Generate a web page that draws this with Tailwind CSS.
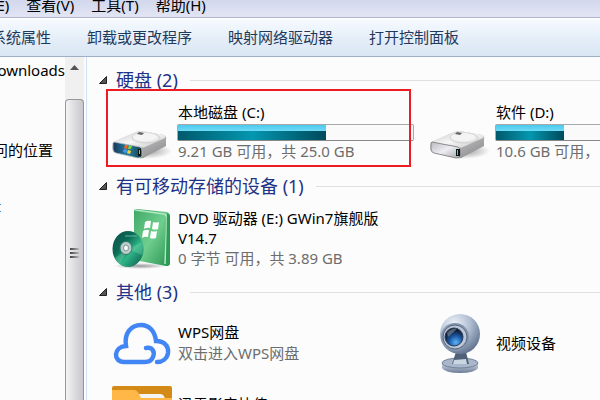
<!DOCTYPE html>
<html lang="zh-CN">

<head>
    <meta charset="UTF-8">
    <meta name="viewport" content="width=device-width, initial-scale=1.0">
    <title>计算机</title>
    <script src="https://cdn.jsdelivr.net/npm/@tailwindcss/browser@4"></script>
</head>

<body class="h-screen flex flex-col overflow-hidden bg-[#fcfcfc] font-['Noto_Sans','Noto_Sans_CJK_SC',sans-serif] text-[15px] leading-5 text-black">

    <!-- Menu bar -->
    <nav class="h-[18px] shrink-0 bg-linear-to-b from-[#d2d7ec] to-[#e2e5f4] border-b border-[#b0b5cc]">
        <div class="h-full flex items-end gap-[17px] -ml-[38px] pb-[2px] whitespace-nowrap">
            <button>编辑(E)</button>
            <button>查看(V)</button>
            <button>工具(T)</button>
            <button>帮助(H)</button>
        </div>
    </nav>

    <!-- Toolbar -->
    <div class="h-[39px] shrink-0 border-t border-b border-t-white border-b-[#a0afc8] bg-linear-to-b from-[#f6fafe] via-[#e6eff9] via-50% to-[#dae6f4]">
        <div class="h-full flex items-center gap-9 -ml-[9px] pb-[2px] whitespace-nowrap text-[#1e395b]">
            <button>系统属性</button>
            <button>卸载或更改程序</button>
            <button>映射网络驱动器</button>
            <button>打开控制面板</button>
        </div>
    </div>

    <div class="flex flex-1 min-h-0">
        <!-- Navigation pane -->
        <aside class="w-[65px] shrink-0 overflow-hidden whitespace-nowrap flex flex-col items-end pt-[3px]">
            <a href="#">Downloads</a>
            <a href="#" class="mt-15 mr-3">最近访问的位置</a>
            <a href="#" class="mt-9 mr-16 text-[#0a5aa8]">Desktop t</a>
        </aside>

        <!-- Scroll bar -->
        <div class="w-[19px] shrink-0 flex flex-col bg-[#f0f0f0]">
            <button aria-label="向上滚动" class="h-[42px] shrink-0 flex justify-center pt-2">
                <svg class="w-[9px] h-[5px]" viewBox="0 0 9 5"><path d="M4.5 0 9 5H0z" fill="#555" /></svg>
            </button>
            <div class="flex-1 border border-b-0 border-[#979797] rounded-t-sm bg-linear-to-r from-[#f5f5f5] via-[#dcdce0] via-50% to-[#c8c8cd] flex flex-col items-center pt-[148px] gap-[2px]">
                <div class="w-[9px] h-[2px] bg-linear-to-r from-[#444] to-[#bbb]"></div>
                <div class="w-[9px] h-[2px] bg-linear-to-r from-[#444] to-[#bbb]"></div>
                <div class="w-[9px] h-[2px] bg-linear-to-r from-[#444] to-[#bbb]"></div>
            </div>
        </div>

        <!-- Content -->
        <main class="flex-1 min-w-0 overflow-hidden ml-[2px] pl-3 pt-[10px] border-l border-[#cfe2f5] whitespace-nowrap flex flex-col gap-3">
            <section>
                <h2 class="flex items-center text-lg leading-[26px] text-[#1e3287]">
                    <svg class="w-2 h-2 mr-[9px]" viewBox="0 0 8 8"><path d="M7.5.5v7H.5z" fill="#555" stroke="#222" /></svg>
                    硬盘 (2)
                    <span class="flex-1 h-px ml-3 bg-[#e0e0e0]"></span>
                </h2>
                <div class="grid grid-cols-[repeat(2,318px)] mt-2 pl-[13px]">
                    <div class="relative h-15 flex gap-[6px]">
                        <div class="absolute -left-[6px] -top-3 w-[305px] h-[78px] border-2 border-[#ed1c24] z-10"></div>
                        <svg class="w-15 h-15 shrink-0" viewBox="0 0 60 60">
                            <defs>
                                <linearGradient id="top" x1="0" y1="0" x2="1" y2="1"><stop offset="0" stop-color="#c9c9cb" /><stop offset=".5" stop-color="#f6f6f6" /><stop offset="1" stop-color="#c5c5c7" /></linearGradient>
                                <linearGradient id="side" x1="0" y1="0" x2="1" y2="1"><stop offset="0" stop-color="#e4e4e6" /><stop offset="1" stop-color="#858588" /></linearGradient>
                                <linearGradient id="face" x1="0" y1="0" x2="1" y2="0"><stop offset="0" stop-color="#17355c" /><stop offset=".5" stop-color="#2680a4" /><stop offset="1" stop-color="#173f4d" /></linearGradient>
                                <radialGradient id="shade"><stop offset="0" stop-color="#000" stop-opacity=".4" /><stop offset="1" stop-color="#000" stop-opacity="0" /></radialGradient>
                            </defs>
                            <ellipse cx="34" cy="50" rx="26" ry="8" fill="url(#shade)" />
                            <path d="M1 41 24 31Q27 30 30 30L52 34Q55 35 54 38L54 45 33 56Q31 58 27 57L4 52Q0 51 0 46z" fill="url(#side)" />
                            <path d="M2 41 24 31Q27 30 30 30L52 34Q55 35 53 37L33 46Q31 47 27 46z" fill="url(#top)" />
                            <ellipse cx="34" cy="37" rx="14" ry="5" fill="#e9e9ea" stroke="#bdbdc0" stroke-width=".6" />
                            <ellipse cx="33" cy="36" rx="12" ry="4" fill="#f4f4f4" />
                            <path d="m27 31 5 1-2 2-5-1z" fill="#666" />
                            <path d="m2 41 26 5q2 1 2 4v5q-1 2-4 2L4 52q-3-1-3-4v-6z" fill="url(#face)" stroke="#b8bfc4" stroke-width=".8" />
                            <path d="m13 44 3 0-1 4-3-1z" fill="#f2642a" /><path d="m17 44 3 1-1 3-3 0z" fill="#8acb38" />
                            <path d="m12 48 3 1-1 3-3-1z" fill="#4a9dec" /><path d="m16 49 3 1-1 3-3-1z" fill="#ffd135" />
                            <path d="M26 48h3v7h-3z" fill="#0a1815" /><path d="M27 49h1v4h-1z" fill="#5ddb50" />
                        </svg>
                        <div class="flex flex-col">
                            <div class="h-6 pt-px">本地磁盘 (C:)</div>
                            <div class="w-[237px] h-[18px] -ml-px border border-[#a9a9a9] border-b-[#888] rounded-xs bg-[#fafafa]" role="meter" aria-label="已用空间" aria-valuenow="63">
                                <div class="h-full flex flex-col bg-linear-to-r from-[#005a6c] via-[#0597b0] to-[#004a5c]" style="width: 63%">
                                    <div class="h-[6px] bg-linear-to-b from-[#4cc8ee] to-[#6fdcf6]"></div>
                                </div>
                            </div>
                            <div class="text-[#6d6d6d]">9.21 GB 可用，共 25.0 GB</div>
                        </div>
                    </div>
                    <div class="h-15 flex gap-[6px]">
                        <svg class="w-15 h-15 shrink-0" viewBox="0 0 60 60">
                            <defs>
                                <linearGradient id="plain" x1="0" y1="0" x2="1" y2="1"><stop offset="0" stop-color="#b9b9be" /><stop offset=".5" stop-color="#ededf3" /><stop offset="1" stop-color="#a4a4a8" /></linearGradient>
                            </defs>
                            <ellipse cx="34" cy="50" rx="26" ry="8" fill="url(#shade)" />
                            <path d="M1 41 24 31Q27 30 30 30L52 34Q55 35 54 38L54 45 33 56Q31 58 27 57L4 52Q0 51 0 46z" fill="url(#side)" />
                            <path d="M2 41 24 31Q27 30 30 30L52 34Q55 35 53 37L33 46Q31 47 27 46z" fill="url(#top)" />
                            <ellipse cx="34" cy="37" rx="14" ry="5" fill="#e9e9ea" stroke="#bdbdc0" stroke-width=".6" />
                            <ellipse cx="33" cy="36" rx="12" ry="4" fill="#f4f4f4" />
                            <path d="m27 31 5 1-2 2-5-1z" fill="#666" />
                            <path d="m2 41 26 5q2 1 2 4v5q-1 2-4 2L4 52q-3-1-3-4v-6z" fill="url(#plain)" stroke="#77777c" stroke-width=".8" />
                            <path d="M26 48h4v7h-4z" fill="#0a1815" /><path d="M27 49h1v5h-1z" fill="#5ddb50" />
                        </svg>
                        <div class="flex flex-col">
                            <div class="h-6 pt-px">软件 (D:)</div>
                            <div class="w-[237px] h-[18px] -ml-px border border-[#a9a9a9] border-b-[#888] rounded-xs bg-[#fafafa]" role="meter" aria-label="已用空间" aria-valuenow="29">
                                <div class="h-full flex flex-col bg-linear-to-r from-[#005a6c] via-[#0597b0] to-[#004a5c]" style="width: 29%">
                                    <div class="h-[6px] bg-linear-to-b from-[#4cc8ee] to-[#6fdcf6]"></div>
                                </div>
                            </div>
                            <div class="text-[#6d6d6d]">10.6 GB 可用，</div>
                        </div>
                    </div>
                </div>
            </section>

            <section>
                <h2 class="flex items-center text-lg leading-[26px] text-[#1e3287]">
                    <svg class="w-2 h-2 mr-[9px]" viewBox="0 0 8 8"><path d="M7.5.5v7H.5z" fill="#555" stroke="#222" /></svg>
                    有可移动存储的设备 (1)
                    <span class="flex-1 h-px ml-3 bg-[#e0e0e0]"></span>
                </h2>
                <div class="grid grid-cols-[repeat(2,318px)] mt-2 pl-[13px]">
                    <div class="h-15 flex gap-[6px]">
                        <svg class="w-15 h-16 shrink-0" viewBox="0 0 60 64">
                            <defs>
                                <linearGradient id="box" x1="0" y1="0" x2="1" y2="1"><stop offset="0" stop-color="#3fa968" /><stop offset=".5" stop-color="#6fce8d" /><stop offset="1" stop-color="#289152" /></linearGradient>
                                <linearGradient id="disc" x1="0" y1="0" x2="1" y2="1"><stop offset="0" stop-color="#0e4f4b" /><stop offset=".35" stop-color="#0a6a56" /><stop offset=".6" stop-color="#2fb486" /><stop offset="1" stop-color="#07554a" /></linearGradient>
                            </defs>
                            <ellipse cx="28" cy="59" rx="26" ry="3" fill="url(#shade)" />
                            <path d="M22 4Q22 2 25 2L55 5Q58 6 58 9V56Q58 59 54 59L22 53z" fill="url(#box)" />
                            <path d="m23 3 29 4q3 1 3 4l-2 46" fill="none" stroke="#b0e8c1" stroke-width="1.5" />
                            <path d="M55 6q3 1 3 4v46q0 3-4 3z" fill="#2b9b55" />
                            <path d="m33 15q3-2 6-1l-1 7q-3-1-6 1zM41 15q3 1 6 0l-1 7q-3 1-6 0zM31 24q3-2 6-1l-1 7q-3-1-6 1zM39 24q3 1 6 0l-1 7q-3 1-6 0z" fill="#fff" />
                            <ellipse cx="16" cy="42" rx="15.5" ry="18" fill="url(#disc)" />
                            <path d="m16 42 14-7q2 6 0 13zM16 42 8 57q-3-2-5-6z" fill="#78e0b0" opacity=".35" />
                            <ellipse cx="14" cy="41" rx="6" ry="6.5" fill="#b9cdca" stroke="#3b756b" />
                            <ellipse cx="14" cy="41" rx="2.5" ry="3" fill="#f6faf9" stroke="#7c9590" />
                            <path d="M13 29h12" stroke="#7fc9b4" stroke-width="1.5" opacity=".5" />
                        </svg>
                        <div class="pt-px">
                            <div>DVD 驱动器 (E:) GWin7旗舰版<br>V14.7</div>
                            <div class="text-[#6d6d6d]">0 字节 可用，共 3.89 GB</div>
                        </div>
                    </div>
                </div>
            </section>

            <section>
                <h2 class="flex items-center text-lg leading-[26px] text-[#1e3287]">
                    <svg class="w-2 h-2 mr-[9px]" viewBox="0 0 8 8"><path d="M7.5.5v7H.5z" fill="#555" stroke="#222" /></svg>
                    其他 (3)
                    <span class="flex-1 h-px ml-3 bg-[#e0e0e0]"></span>
                </h2>
                <div class="grid grid-cols-[repeat(2,318px)] gap-y-3 mt-2 pl-[13px]">
                    <div class="h-15 flex items-center gap-[6px]">
                        <svg class="w-15 h-15 shrink-0" viewBox="0 0 60 60" fill="none" stroke="#4285f4" stroke-width="4.5" stroke-linecap="round">
                            <path d="M34 35C41 34 43 39 41 44Q39 49 33 49H12C1 49 1 34 14 33C12 20 19 12 29 12C37 12 43 18 44 28C52 28 57 33 56 40C55 46 50 49 45 49" />
                        </svg>
                        <div class="leading-[21px]">
                            <div>WPS网盘</div>
                            <div class="text-[#6d6d6d]">双击进入WPS网盘</div>
                        </div>
                    </div>
                    <div class="h-15 flex items-center gap-[6px]">
                        <svg class="w-15 h-15 shrink-0" viewBox="0 0 60 60">
                            <defs>
                                <radialGradient id="ball" cx=".35" cy=".25" r=".8"><stop offset="0" stop-color="#eef3fa" /><stop offset=".5" stop-color="#b1bfd3" /><stop offset="1" stop-color="#5e708c" /></radialGradient>
                                <radialGradient id="lens" cx=".6" cy=".8" r=".7"><stop offset="0" stop-color="#5bb6fa" /><stop offset=".5" stop-color="#1d5ba8" /><stop offset="1" stop-color="#0b1426" /></radialGradient>
                                <linearGradient id="base" x1="0" y1="0" x2="0" y2="1"><stop offset="0" stop-color="#d3dce8" /><stop offset="1" stop-color="#6a7b94" /></linearGradient>
                            </defs>
                            <path d="M12 50v5q3 5 18 5t18-5v-5z" fill="url(#base)" />
                            <ellipse cx="30" cy="50" rx="18" ry="5" fill="#a9b7ca" stroke="#71829b" />
                            <path d="M26 39h10l3 12H22z" fill="#506079" /><path d="m24 47 12-1 1 5H23z" fill="#cad5e2" />
                            <circle cx="30" cy="21" r="20" fill="url(#ball)" />
                            <circle cx="25" cy="24" r="14" fill="#8494ac" />
                            <circle cx="25" cy="24" r="12" fill="#bac6d8" stroke="#58687f" />
                            <circle cx="24" cy="24" r="9" fill="url(#lens)" stroke="#2b3a52" />
                            <path d="m17 20q4-5 10-4l-9 8z" fill="#9aa9bd" opacity=".5" />
                        </svg>
                        <div>视频设备</div>
                    </div>
                    <div class="h-15 flex gap-[6px]">
                        <svg class="w-15 h-15 shrink-0" viewBox="0 0 60 60">
                            <path d="M0 3q0-2 2-2h56q2 0 2 2v55H0z" fill="#d48a17" />
                            <path d="M24 9h24q4 0 5 5v20H24z" fill="#f4f4f4" />
                            <path d="M0 5h22q3 0 5 4l2 4h31v45H0z" fill="#ffb848" />
                        </svg>
                        <div class="leading-[21px] pt-[9px]">迅雷影音快传(x)</div>
                    </div>
                </div>
            </section>
        </main>
    </div>

</body>

</html>
